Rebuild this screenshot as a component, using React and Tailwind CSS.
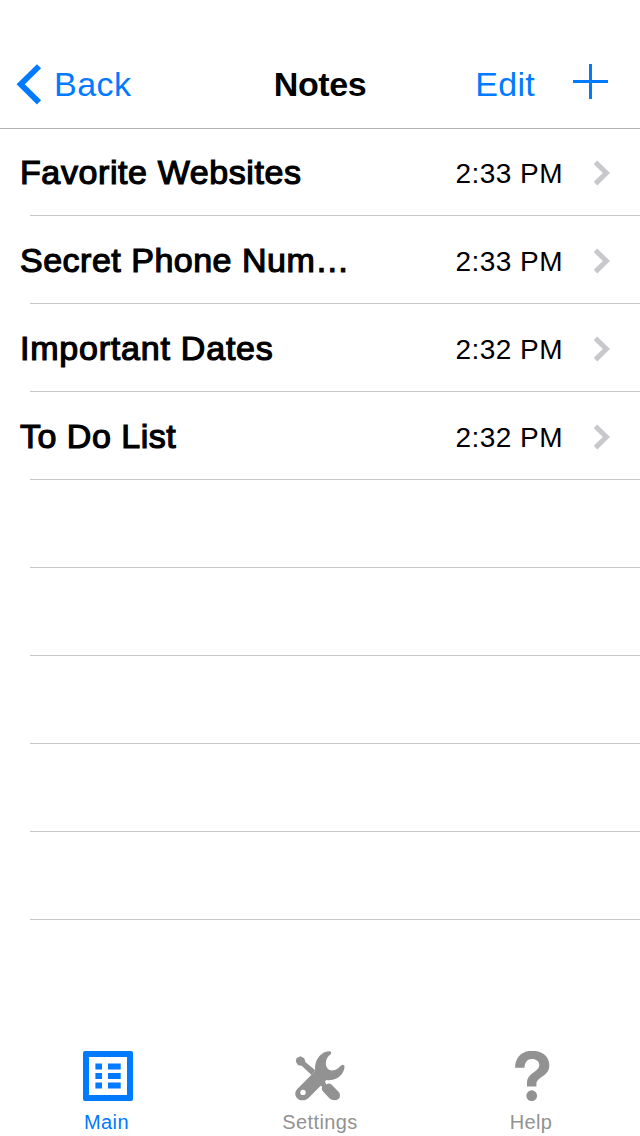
import React, { useState } from 'react';

const notes = [
  { id: 1, title: 'Favorite Websites', time: '2:33 PM', tracking: 'tracking-[0.6px]' },
  { id: 2, title: 'Secret Phone Num…', time: '2:33 PM', tracking: 'tracking-[0.5px]' },
  { id: 3, title: 'Important Dates', time: '2:32 PM', tracking: 'tracking-[0.78px]' },
  { id: 4, title: 'To Do List', time: '2:32 PM', tracking: 'tracking-[0.5px]' },
];

const EMPTY_ROWS = 5;

function MainIcon() {
  return (
    <svg width="50" height="50" viewBox="0 0 50 50" fill="currentColor">
      <path
        fillRule="evenodd"
        d="M2 0H48Q50 0 50 2V48Q50 50 48 50H2Q0 50 0 48V2Q0 0 2 0ZM6 6V44H44V6Z"
      />
      <path d="M12.4 12.4H19V18.6H12.4ZM25 12.4H37.7V18.6H25ZM12.4 22H19V28H12.4ZM25 22H37.7V28H25ZM12.4 31.4H19V37.6H12.4ZM25 31.4H37.7V37.6H25Z" />
    </svg>
  );
}

function SettingsIcon() {
  return (
    <svg width="50" height="50" viewBox="0 0 50 50" fill="currentColor">
      <path d="M.8 10.5L1.6 7L5.5 5.2L9.2 7.3L10.6 11.2L20.5 19.5L16.5 24L6.7 14.8L3 14.3Z" />
      <path d="M23 33L28.5 27L31.3 33.4Q34 31.4 36.5 33.6L44.2 41.6Q46 45 43.8 47.7Q41 49.6 38 49.1Q36 48.8 34.6 47.5L27.6 40Q26 37.6 27.2 35.8Z" />
      <path
        fillRule="evenodd"
        d="M2.3 38L20.2 20C19.5 13 21.5 7 26.5 3.2C29.5 1 33 0 35.4 .5Q37 1.6 35.8 2.9C32.5 5.4 30.8 8.3 30.8 12.5C31 16.7 33.3 19.4 37 19.4C41.3 19.3 43.8 16.6 46.3 14.2Q48.5 13 49.4 14.8C50 19.5 46.5 25 41.5 27.6C37.5 29.4 34 29.4 31.4 29L13 47.4C9.8 50 5 50 2.3 47.4C-.4 44.5 -.4 41 2.3 38ZM8 38.7A2.7 2.7 0 1 0 8 44.1A2.7 2.7 0 1 0 8 38.7Z"
      />
    </svg>
  );
}

function HelpIcon() {
  return (
    <svg width="50" height="50" viewBox="0 0 50 50" fill="currentColor">
      <path d="M8 16.8C8.3 6.3 14.8 -.3 25 -.3C35.3 -.3 42.3 5.6 42.3 14.2C42.3 19.2 40 22.3 35.8 25.3C31.3 28.4 29.4 30.2 29.4 33V35.5H20V32C20 27.3 22.3 24.3 26.5 21.4C30.5 18.7 32.3 17 32.3 13.8C32.3 10.3 29.2 7.9 25 7.9C20.5 7.9 17.5 11.3 17.5 16.8Z" />
      <circle cx="24.7" cy="44.7" r="5.4" />
    </svg>
  );
}

function NavBar() {
  return (
    <header className="grid h-[129px] grid-cols-[1fr_auto_1fr] items-start border-b border-[#b2b2b2] pt-10 text-[34px] leading-[88px]">
      <button className="flex items-center pl-4 text-[#007aff]">
        <svg width="26" height="42" viewBox="0 0 26 42" fill="none">
          <path d="M23 3.2L4.7 21.3L23 39.4" stroke="currentColor" strokeWidth="5.8" />
        </svg>
        <span className="pl-3 tracking-[0.5px]">Back</span>
      </button>
      <h1 className="font-bold tracking-[-0.4px]">Notes</h1>
      <div className="flex items-start justify-end pr-8 text-[#007aff]">
        <button className="tracking-[0.3px]">Edit</button>
        <button className="pl-[38px] pt-6">
          <svg className="block" width="35" height="35" viewBox="0 0 35 35" fill="currentColor">
            <path d="M16 0h3v16h16v3H19v16h-3V19H0v-3h16z" />
          </svg>
        </button>
      </div>
    </header>
  );
}

function NoteRow({ note }) {
  return (
    <li className="h-[88px]">
      <div className="flex h-[87px] items-center pl-5 pr-[30px]">
        <span className={`flex-1 text-[34px] leading-[44px] [-webkit-text-stroke:1.2px_black] ${note.tracking}`}>
          {note.title}
        </span>
        <span className="pt-[5px] text-[28px] leading-[40px] tracking-[0.45px]">{note.time}</span>
        <svg className="ml-[30px] mt-0.5" width="17" height="26" viewBox="0 0 17 26" fill="none">
          <path d="M2.5 2.4L13.4 13L2.5 23.6" stroke="#c7c7cc" strokeWidth="5" />
        </svg>
      </div>
      <div className="ml-[30px] h-px bg-[#c8c7cc]" />
    </li>
  );
}

const tabs = [
  { key: 'main', label: 'Main', icon: MainIcon, labelClass: 'pr-[3px]' },
  { key: 'settings', label: 'Settings', icon: SettingsIcon, labelClass: '' },
  { key: 'help', label: 'Help', icon: HelpIcon, labelClass: 'pr-0.5' },
];

export default function App() {
  const [activeTab, setActiveTab] = useState('main');

  return (
    <div className="flex h-[1136px] w-[640px] flex-col bg-white font-['Liberation_Sans',Arial,sans-serif] text-black">
      <NavBar />

      <ul className="-mt-px flex-1">
        {notes.map((note) => (
          <NoteRow key={note.id} note={note} />
        ))}
        {Array.from({ length: EMPTY_ROWS }, (_, i) => (
          <li key={i} className="h-[88px] pl-[30px] pt-[87px]">
            <div className="h-px bg-[#c8c7cc]" />
          </li>
        ))}
      </ul>

      <nav className="flex h-[98px] px-0.5 pt-[13px]">
        {tabs.map(({ key, label, icon: Icon, labelClass }) => (
          <button
            key={key}
            onClick={() => setActiveTab(key)}
            className={`flex w-[212px] flex-col items-center ${activeTab === key ? 'text-[#007aff]' : 'text-[#929292]'}`}
          >
            <Icon />
            <span className={`pt-[9px] text-[20px] leading-6 tracking-[0.4px] ${labelClass}`}>{label}</span>
          </button>
        ))}
      </nav>
    </div>
  );
}
